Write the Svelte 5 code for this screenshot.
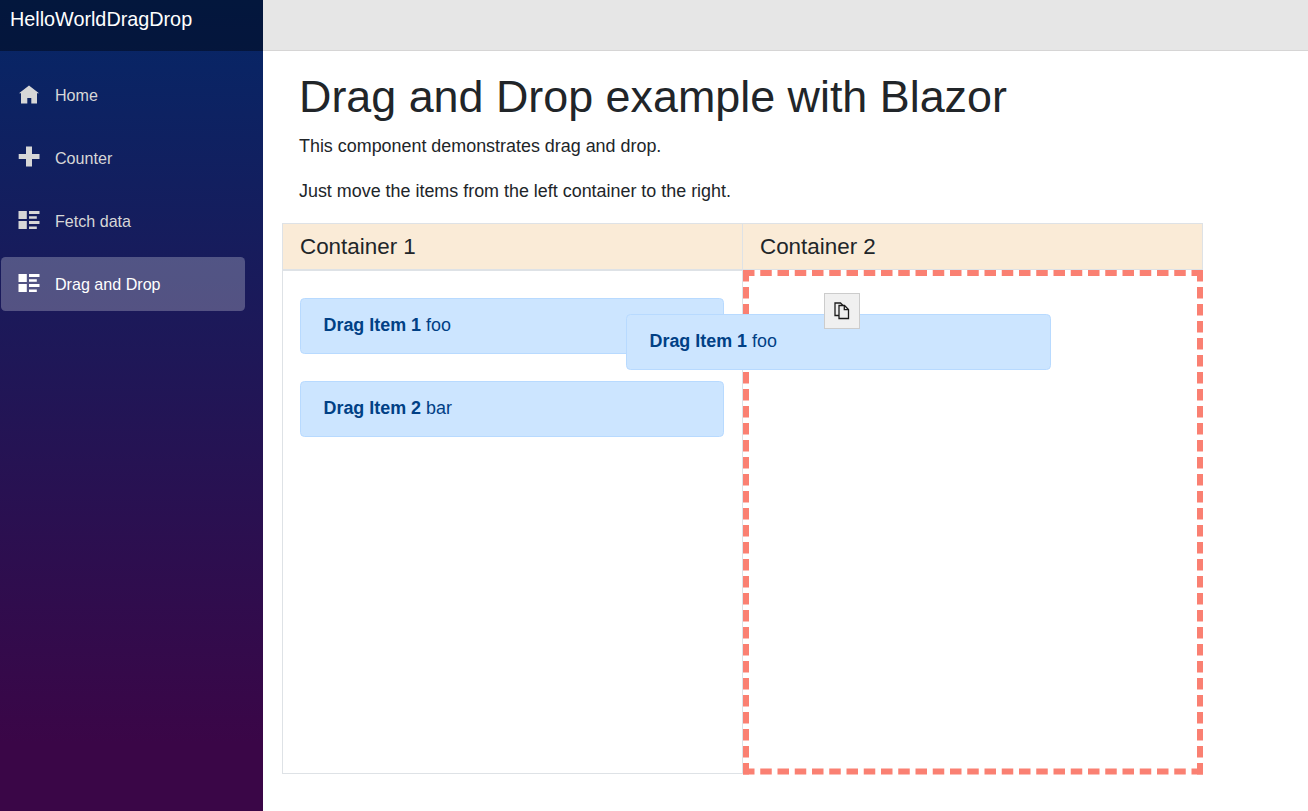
<script>
  const nav = [
    { label: 'Home', icon: 'home' },
    { label: 'Counter', icon: 'plus' },
    { label: 'Fetch data', icon: 'list' },
    { label: 'Drag and Drop', icon: 'list', active: true }
  ];
  const items = [
    { name: 'Drag Item 1', text: 'foo' },
    { name: 'Drag Item 2', text: 'bar' }
  ];
</script>

<div class="page">
  <aside>
    <div class="brand">HelloWorldDragDrop</div>
    <nav>
      {#each nav as n}
        <div class="link" class:active={n.active}>
          <svg class="icon" width="24" height="24" viewBox="0 0 24 24" fill="currentColor">
            {#if n.icon === 'home'}
              <path d="M12 2.600 22 10.300H20V20.600H14.300V15H10.300V20.600H4V10.300H2Z" />
            {:else if n.icon === 'plus'}
              <path d="M9 1.500h6v7.500h7.500v5H15v7.500H9V14H1.700V9H9z" />
            {:else}
              <path d="M1.500 3h8.300v8H1.500zM1.500 13h8.300v8H1.500zM12 3h10.500v3H12zM12 8.200h7.800v2.600H12zM12 13h10.500v3H12zM12 18.400h7.800V21H12z" />
            {/if}
          </svg>
          <span>{n.label}</span>
        </div>
      {/each}
    </nav>
  </aside>
  <main>
    <header></header>
    <section class="content">
      <h1>Drag and Drop example with Blazor</h1>
      <p>This component demonstrates drag and drop.</p>
      <p>Just move the items from the left container to the right.</p>
      <div class="board">
        <div class="col">
          <h5>Container 1</h5>
          <div class="zone">
            {#each items as item}
              <div class="item"><strong>{item.name}</strong> {item.text}</div>
            {/each}
          </div>
        </div>
        <div class="col">
          <h5>Container 2</h5>
          <div class="zone drop">
            <svg class="dashes" width="460" height="505" viewBox="0 0 460 505">
              <g fill="none" stroke="#fa8072" stroke-width="6">
                <path d="M0 3H460M0 501.500H460" stroke-dasharray="11.5 5.75" />
                <path d="M3 0V504.500M457 0V504.500" stroke-dasharray="11.5 5.5" />
              </g>
            </svg>
          </div>
        </div>
        <div class="item ghost"><strong>Drag Item 1</strong> foo</div>
        <div class="cursor">
          <svg width="16" height="18" viewBox="0 0 16 18" fill="#f0f0f0" stroke="#1c1c1c" stroke-width="1.300">
            <path d="M5 13.500H1V1h5.500L9 3.500" />
            <path d="M5 3.500h5.500L14.500 7.500v9H5z" />
            <path d="M10.300 3.500v4.200h4.200" fill="none" />
          </svg>
        </div>
      </div>
    </section>
  </main>
</div>

<style>
  :global(body) { margin: 0; background: #fff; }
  .page {
    display: flex;
    height: 811px;
    overflow: hidden;
    font-family: "Liberation Sans", Arial, sans-serif;
    font-size: 17.92px;
    line-height: 27px;
    color: #212529;
  }
  aside {
    width: 263px;
    flex: none;
    background: linear-gradient(180deg, #052767 0%, #3a0647 70%);
    background-size: 100% 1060px;
  }
  .brand {
    box-sizing: border-box;
    height: 51px;
    padding: 6px 10px;
    background: rgba(0, 0, 0, 0.4);
    color: #fff;
    font-size: 19.8px;
  }
  nav { display: flex; flex-direction: column; gap: 8.800px; padding: 17.700px 18px 0 1px; }
  .link {
    display: flex;
    align-items: center;
    height: 54px;
    padding-left: 16px;
    border-radius: 4.500px;
    color: #d7d7d7;
    font-size: 16.1px;
  }
  .link.active { background: rgba(255, 255, 255, 0.25); color: #fff; }
  .icon { margin-right: 14px; position: relative; top: -1px; }
  main { flex: 1; min-width: 0; }
  header { box-sizing: border-box; height: 51px; background: #e6e6e6; border-bottom: 1px solid #d6d5d5; }
  .content { padding: 19px 105px 0 19px; }
  h1 { margin: 0 0 9px 17px; font-size: 44.85px; line-height: 54px; font-weight: 400; }
  p { margin: 0 0 18px 17px; }
  .board { position: relative; display: flex; width: 921px; }
  .col { box-sizing: border-box; width: 460px; border-left: 1px solid #dee2e6; }
  .col + .col { width: 461px; }
  .col + .col h5 { border-right: 1px solid #dee2e6; }
  h5 {
    box-sizing: border-box;
    height: 47px;
    margin: 0;
    padding: 0 17px;
    border-top: 1px solid #dee2e6;
    border-bottom: 1px solid #dee2e6;
    background: #faebd7;
    font-size: 22.4px;
    line-height: 46px;
    font-weight: 400;
  }
  .zone {
    box-sizing: border-box;
    height: 504px;
    padding: 27px 18px 0 17px;
    border-top: 1px solid #dee2e6;
    border-bottom: 1px solid #dee2e6;
  }
  .zone.drop { padding: 0; border: 0; }
  .dashes { display: block; }
  .item {
    box-sizing: border-box;
    height: 56px;
    margin-bottom: 27px;
    padding: 0 22.500px;
    border: 1px solid #b8daff;
    border-radius: 4.500px;
    background: #cce5ff;
    color: #004085;
    line-height: 53px;
  }
  .ghost { position: absolute; left: 344px; top: 91px; width: 425px; margin: 0; }
  .cursor {
    position: absolute;
    left: 542px;
    top: 70px;
    box-sizing: border-box;
    width: 36px;
    height: 36px;
    display: flex;
    align-items: center;
    justify-content: center;
    background: #f0f0f0;
    border: 1px solid #ccc;
  }
</style>
